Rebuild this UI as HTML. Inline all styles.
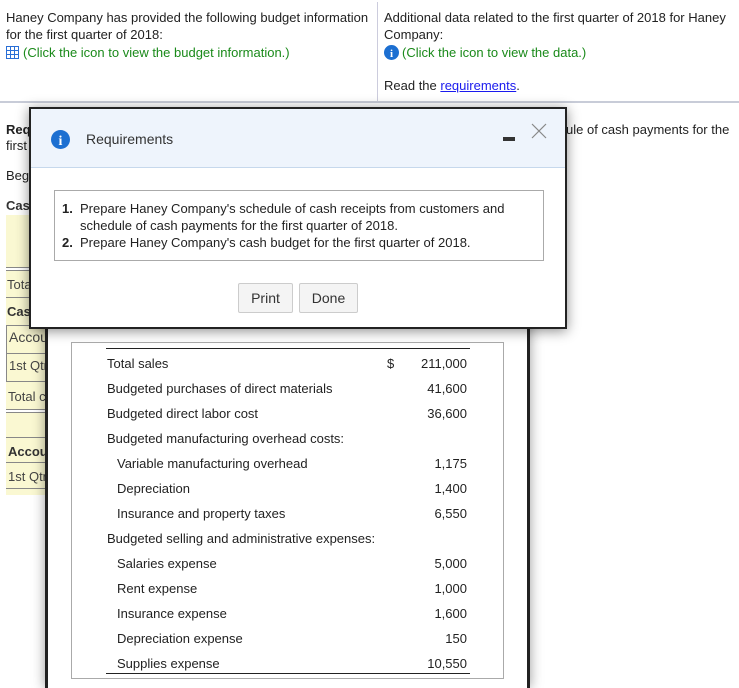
<!DOCTYPE html>
<html><head><meta charset="utf-8">
<style>
*{margin:0;padding:0;box-sizing:border-box}
html,body{width:739px;height:688px;overflow:hidden;background:#fff}
#w{position:relative;width:739px;height:688px;overflow:hidden;font-family:"Liberation Sans",Arial,sans-serif;font-size:13px;color:#222}
.a{position:absolute;white-space:nowrap}
.g{color:#1a8a1a}
.ln{position:absolute;height:1px;background:#888}
</style></head><body><div id="w">
<div class="a" style="left:6px;top:9px;line-height:17px">Haney Company has provided the following budget information<br>for the first quarter of 2018:</div>
<div class="a g" style="left:6px;top:44px;line-height:17px"><svg width="13" height="13" style="vertical-align:-2px;margin-right:4px"><rect x="0" y="0" width="13" height="13" fill="#2a6fd6"/><g fill="#fff"><rect x="1" y="1" width="3" height="3"/><rect x="5" y="1" width="3" height="3"/><rect x="9" y="1" width="3" height="3"/><rect x="1" y="5" width="3" height="3"/><rect x="5" y="5" width="3" height="3"/><rect x="9" y="5" width="3" height="3"/><rect x="1" y="9" width="3" height="3"/><rect x="5" y="9" width="3" height="3"/><rect x="9" y="9" width="3" height="3"/></g></svg>(Click the icon to view the budget information.)</div>
<div style="position:absolute;left:377px;top:2px;width:1px;height:99px;background:#ccd"></div>
<div class="a" style="left:384px;top:9px;line-height:17px">Additional data related to the first quarter of 2018 for Haney<br>Company:</div>
<div class="a g" style="left:384px;top:44px;line-height:17px"><svg width="15" height="15" style="vertical-align:-3px;margin-right:3px"><circle cx="7.5" cy="7.5" r="7.5" fill="#1c6fd1"/><text x="7.5" y="12" text-anchor="middle" fill="#fff" font-size="11" font-weight="bold" font-family="Liberation Serif">i</text></svg>(Click the icon to view the data.)</div>
<div class="a" style="left:384px;top:78px">Read the <span style="color:#1a1aee;text-decoration:underline">requirements</span>.</div>
<div style="position:absolute;left:0;top:101px;width:739px;height:2px;background:#c8ccd8"></div>
<div class="a" style="left:6px;top:122px;font-weight:bold">Req</div>
<div class="a" style="left:6px;top:138px">first</div>
<div class="a" style="left:566px;top:122px">ule of cash payments for the</div>
<div class="a" style="left:6px;top:168px">Beg</div>
<div class="a" style="left:6px;top:198px;font-weight:bold;color:#333">Cas</div>
<div style="position:absolute;left:6px;top:215px;width:42px;height:52px;background:#faf8d2"></div>
<div class="ln" style="left:6px;top:267px;width:42px"></div><div class="ln" style="left:6px;top:270px;width:42px"></div>
<div style="position:absolute;left:6px;top:271px;width:42px;height:27px;background:#faf8d2"></div>
<div class="a" style="left:7px;top:277px;color:#444">Tota</div>
<div class="ln" style="left:6px;top:297px;width:42px"></div>
<div style="position:absolute;left:6px;top:298px;width:42px;height:28px;background:#faf8d2"></div>
<div class="a" style="left:7px;top:304px;font-weight:bold;color:#333">Cas</div>
<div style="position:absolute;left:6px;top:325px;width:44px;height:57px;background:#faf8d2;border:1px solid #888"></div>
<div class="ln" style="left:6px;top:353px;width:44px"></div>
<div class="a" style="left:9px;top:329px;color:#444;font-size:14px">Accou</div>
<div class="a" style="left:9px;top:358px;color:#444">1st Qtr</div>
<div style="position:absolute;left:6px;top:382px;width:42px;height:28px;background:#faf8d2"></div>
<div class="a" style="left:8px;top:389px;color:#444">Total c</div>
<div class="ln" style="left:6px;top:409px;width:42px"></div><div class="ln" style="left:6px;top:412px;width:42px"></div>
<div style="position:absolute;left:6px;top:413px;width:42px;height:82px;background:#faf8d2"></div>
<div class="ln" style="left:6px;top:437px;width:42px"></div>
<div class="a" style="left:8px;top:444px;font-weight:bold;color:#333">Accou</div>
<div class="ln" style="left:6px;top:462px;width:42px"></div>
<div class="a" style="left:8px;top:469px;color:#444">1st Qtr</div>
<div class="ln" style="left:6px;top:488px;width:42px"></div>
<div style="position:absolute;left:45px;top:300px;width:485px;height:388px;background:#fff;border:3px solid #222;border-bottom:0;box-shadow:0 0 12px rgba(0,0,0,.4)"></div>
<div style="position:absolute;left:71px;top:342px;width:433px;height:337px;border:1px solid #aaa">
 <div style="position:absolute;left:34px;top:5px;width:364px;height:1px;background:#222"></div>
 <div style="position:absolute;left:34px;top:330px;width:364px;height:1px;background:#222"></div>
 <div class="a" style="left:35px;top:13px">Total sales</div><div class="a" style="left:315px;top:13px">$</div><div class="a" style="right:36px;top:13px">211,000</div>
 <div class="a" style="left:35px;top:38px">Budgeted purchases of direct materials</div><div class="a" style="right:36px;top:38px">41,600</div>
 <div class="a" style="left:35px;top:63px">Budgeted direct labor cost</div><div class="a" style="right:36px;top:63px">36,600</div>
 <div class="a" style="left:35px;top:88px">Budgeted manufacturing overhead costs:</div>
 <div class="a" style="left:45px;top:113px">Variable manufacturing overhead</div><div class="a" style="right:36px;top:113px">1,175</div>
 <div class="a" style="left:45px;top:138px">Depreciation</div><div class="a" style="right:36px;top:138px">1,400</div>
 <div class="a" style="left:45px;top:163px">Insurance and property taxes</div><div class="a" style="right:36px;top:163px">6,550</div>
 <div class="a" style="left:35px;top:188px">Budgeted selling and administrative expenses:</div>
 <div class="a" style="left:45px;top:213px">Salaries expense</div><div class="a" style="right:36px;top:213px">5,000</div>
 <div class="a" style="left:45px;top:238px">Rent expense</div><div class="a" style="right:36px;top:238px">1,000</div>
 <div class="a" style="left:45px;top:263px">Insurance expense</div><div class="a" style="right:36px;top:263px">1,600</div>
 <div class="a" style="left:45px;top:288px">Depreciation expense</div><div class="a" style="right:36px;top:288px">150</div>
 <div class="a" style="left:45px;top:313px">Supplies expense</div><div class="a" style="right:36px;top:313px">10,550</div>
</div>
<div style="position:absolute;left:29px;top:107px;width:538px;height:222px;background:#fff;border:2px solid #222;box-shadow:0 2px 12px rgba(0,0,0,.45)">
 <div style="position:absolute;left:0;top:0;width:534px;height:59px;background:#eef4fc;border-bottom:1px solid #c6d8ec"></div>
 <svg style="position:absolute;left:20px;top:21px" width="19" height="19"><circle cx="9.5" cy="9.5" r="9.5" fill="#1c6fd1"/><text x="9.5" y="15" text-anchor="middle" fill="#fff" font-size="14" font-weight="bold" font-family="Liberation Serif">i</text></svg>
 <div class="a" style="left:55px;top:22px;font-size:14px;color:#333">Requirements</div>
 <div style="position:absolute;left:472px;top:28px;width:12px;height:4px;background:#333"></div>
 <svg style="position:absolute;left:500px;top:14px" width="16" height="16"><path d="M1 1L15 15M15 1L1 15" stroke="#888" stroke-width="1.2"/></svg>
 <div style="position:absolute;left:23px;top:81px;width:490px;height:71px;border:1px solid #aaa"></div>
 <div class="a" style="left:31px;top:91px;line-height:17px"><b>1.</b></div>
 <div class="a" style="left:49px;top:91px;line-height:17px">Prepare Haney Company's schedule of cash receipts from customers and<br>schedule of cash payments for the first quarter of 2018.</div>
 <div class="a" style="left:31px;top:126px"><b>2.</b></div>
 <div class="a" style="left:49px;top:126px">Prepare Haney Company's cash budget for the first quarter of 2018.</div>
 <div style="position:absolute;left:207px;top:174px;width:55px;height:30px;border:1px solid #ccc;border-radius:2px;background:#f4f4f4;text-align:center;line-height:28px;font-size:14px;color:#333">Print</div>
 <div style="position:absolute;left:268px;top:174px;width:59px;height:30px;border:1px solid #ccc;border-radius:2px;background:#f4f4f4;text-align:center;line-height:28px;font-size:14px;color:#333">Done</div>
</div>
</div></body></html>
